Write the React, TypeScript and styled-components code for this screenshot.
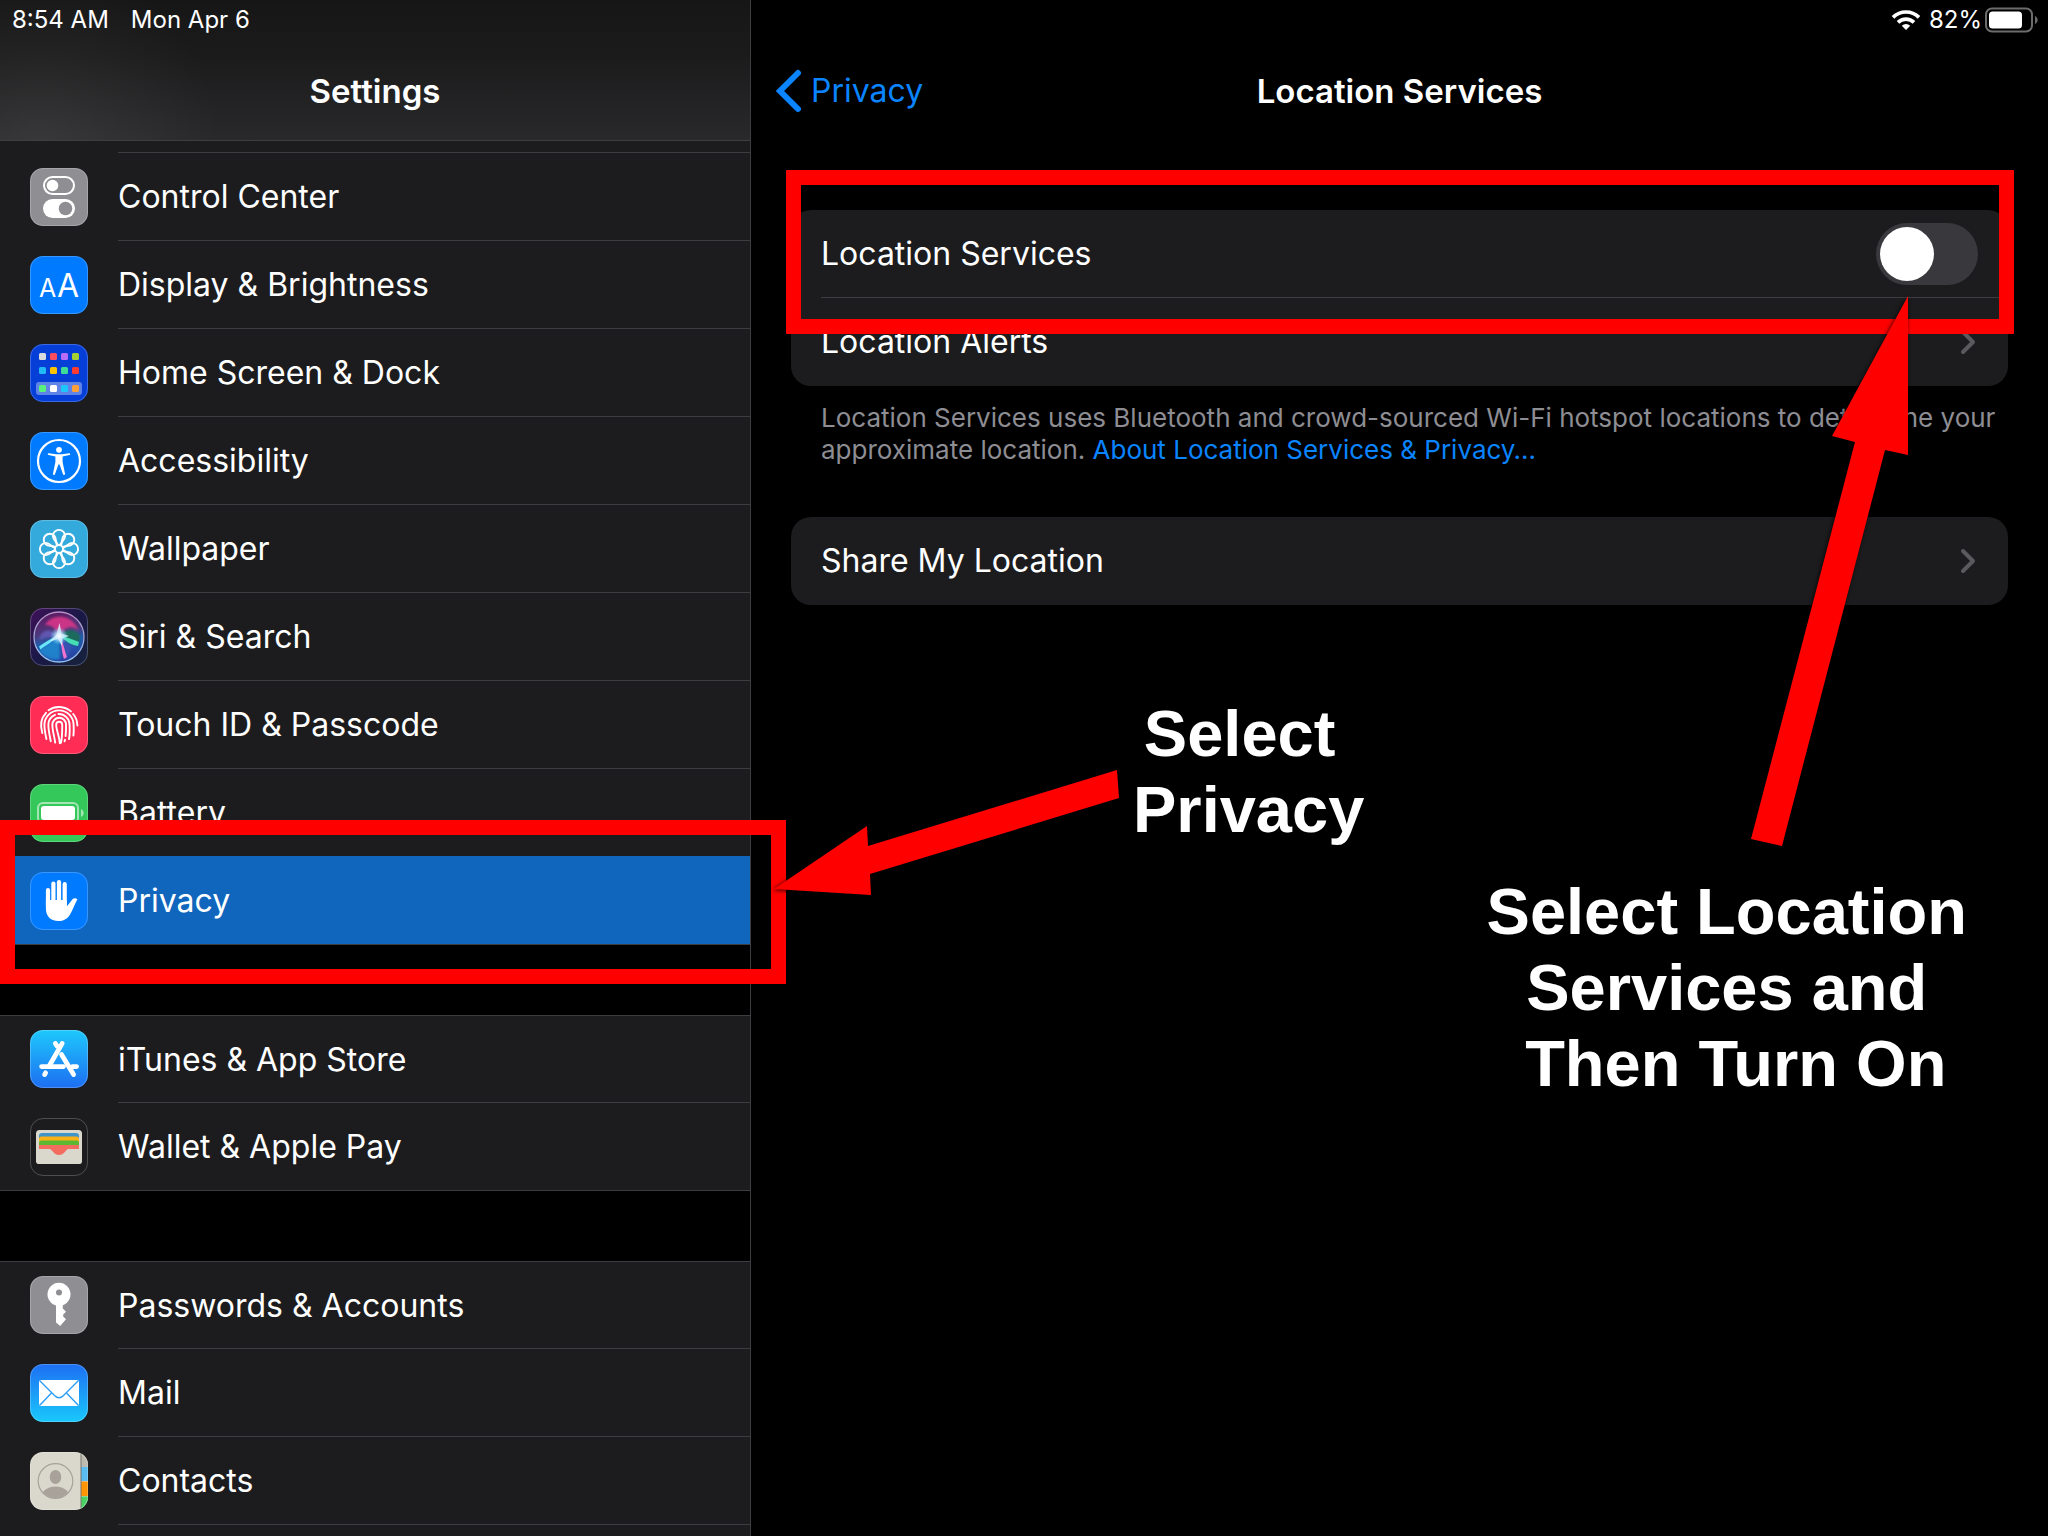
import React from "react";
import styled, { createGlobalStyle, css } from "styled-components";

const GlobalStyle = createGlobalStyle`
  *, *::before, *::after { box-sizing: border-box; }
  html, body { margin: 0; background: #000; }
  body {
    font-family: Inter, "Noto Sans", "Liberation Sans", sans-serif;
    color: #fff;
  }
  ul { list-style: none; margin: 0; padding: 0; }
  h1, h2, p { margin: 0; }
`;

const colors = {
  cell: "#1c1c1e",
  line: "#3d3d41",
  blue: "#0a84ff",
  selected: "#1065bd",
  muted: "#8d8d93",
  mark: "#ff0000",
};

/* ---------- layout ---------- */

const Page = styled.div`
  position: relative;
  display: flex;
  height: 100vh;
  overflow: hidden;
  background: #000;
`;

const Sidebar = styled.aside`
  display: flex;
  flex-direction: column;
  flex: 0 0 751px;
  min-height: 0;
  border-right: 1px solid ${colors.line};
`;

const SidebarTop = styled.header`
  flex: none;
  border-bottom: 1px solid ${colors.line};
  background:
    radial-gradient(circle at 40px 140px, rgba(255, 255, 255, 0.07), transparent 180px),
    linear-gradient(#161617 0%, #1b1b1c 40%, #29292b 100%);
`;

const Detail = styled.main`
  flex: 1;
  min-width: 0;
`;

const StatusBar = styled.div<{ $end?: boolean }>`
  display: flex;
  align-items: center;
  justify-content: ${(p) => (p.$end ? "flex-end" : "flex-start")};
  gap: ${(p) => (p.$end ? "8px" : "22px")};
  height: 40px;
  padding: 0 ${(p) => (p.$end ? "10px" : "12px")};
  font-size: 24px;
  line-height: 32px;
`;

const Charge = styled.span`
  display: flex;
  align-items: center;
  gap: 2px;
`;

const NavBar = styled.div`
  display: grid;
  grid-template-columns: 1fr auto 1fr;
  align-items: center;
  height: 100px;
  padding: 2px 24px 0;
`;

const NavTitle = styled.h1`
  grid-column: 2;
  font-size: 33px;
  line-height: 40px;
  font-weight: 600;
`;

const BackButton = styled.button`
  display: flex;
  align-items: center;
  justify-self: start;
  gap: 8px;
  padding: 0;
  border: 0;
  background: none;
  color: ${colors.blue};
  font: inherit;
  font-size: 32px;
  line-height: 40px;
`;

/* ---------- settings list ---------- */

const Groups = styled.nav`
  display: flex;
  flex-direction: column;
  gap: 70px;
  min-height: 0;
  overflow: hidden;
`;

const Group = styled.ul<{ $continues?: boolean }>`
  flex: none;
  background: ${colors.cell};
  border-bottom: 1px solid ${colors.line};
  ${(p) =>
    p.$continues
      ? css`
          padding-top: 11px;
        `
      : css`
          border-top: 1px solid ${colors.line};
        `}
`;

const RowButton = styled.button<{ $selected?: boolean; $ruled?: boolean }>`
  display: flex;
  align-items: stretch;
  width: 100%;
  height: ${(p) => (p.$ruled ? "88px" : "86px")};
  padding: 0 0 0 30px;
  gap: 30px;
  border: 0;
  background: ${(p) => (p.$selected ? colors.selected : "transparent")};
  color: inherit;
  font: inherit;
  font-size: 32px;
  line-height: 40px;
  text-align: left;
`;

const IconTile = styled.span<{ $bg: string; $ruled?: boolean }>`
  align-self: center;
  flex: none;
  width: 58px;
  height: 58px;
  margin-top: ${(p) => (p.$ruled ? "2px" : "0")};
  border-radius: 13px;
  overflow: hidden;
  background: ${(p) => p.$bg};
  outline: 1px solid rgba(255, 255, 255, 0.22);
  outline-offset: -1px;

  svg { display: block; width: 58px; height: 58px; }
`;

const RowLabel = styled.span<{ $ruled?: boolean; $clear?: boolean }>`
  display: flex;
  align-items: center;
  flex: 1;
  border-top: ${(p) => (p.$ruled ? `1px solid ${p.$clear ? "transparent" : colors.line}` : "0")};
  padding-top: 1px;
`;

const NextRow = styled.li`
  height: 88px;
  margin-left: 118px;
  border-top: 1px solid ${colors.line};
`;

/* ---------- detail cards ---------- */

const Sections = styled.div`
  display: flex;
  flex-direction: column;
  padding: 70px 40px;
`;

const Card = styled.div`
  border-radius: 20px;
  background: ${colors.cell};
  padding-left: 30px;
`;

const CardRow = styled.div<{ $ruled?: boolean }>`
  display: flex;
  align-items: center;
  justify-content: space-between;
  height: 88px;
  padding-right: 30px;
  border-bottom: ${(p) => (p.$ruled ? `1px solid ${colors.line}` : "0")};
  font-size: 32px;
  line-height: 40px;
`;

const CardLink = styled.button`
  display: flex;
  align-items: center;
  justify-content: space-between;
  width: 100%;
  height: 88px;
  padding: 0 32px 0 0;
  border: 0;
  background: none;
  color: inherit;
  font: inherit;
  font-size: 32px;
  line-height: 40px;
  text-align: left;
`;

const Footnote = styled.p`
  padding: 16px 10px 51px 30px;
  color: ${colors.muted};
  font-size: 26px;
  line-height: 32px;
`;

const FootLink = styled.a`
  color: ${colors.blue};
  text-decoration: none;
`;

const Switch = styled.input`
  appearance: none;
  flex: none;
  display: flex;
  align-items: center;
  width: 102px;
  height: 62px;
  margin: 0;
  padding: 4px;
  border-radius: 31px;
  background: #39393d;

  &::before {
    content: "";
    width: 54px;
    height: 54px;
    border-radius: 50%;
    background: #fff;
  }
  &:checked { background: #30d158; justify-content: flex-end; }
`;

/* ---------- annotations laid over the screen ---------- */

const Notes = styled.div`
  position: absolute;
  inset: 0;
  pointer-events: none;
`;

const frame = css`
  position: absolute;
  height: 164px;
  border: 15px solid ${colors.mark};
`;

const PrivacyFrame = styled.div`
  ${frame}
  top: 820px;
  left: 0;
  width: 786px;
`;

const ServicesFrame = styled.div`
  ${frame}
  top: 170px;
  left: 786px;
  right: 34px;
`;

const arrow = css`
  position: absolute;
  overflow: visible;
  fill: ${colors.mark};
  filter: drop-shadow(-1px 1px 2px rgba(0, 0, 0, 0.8));
`;

const PrivacyArrow = styled.svg`
  ${arrow}
  top: 760px;
  left: 770px;
`;

const ServicesArrow = styled.svg`
  ${arrow}
  top: 290px;
  right: 128px;
`;

const note = css`
  position: absolute;
  font-family: "Liberation Sans", Arial, sans-serif;
  font-weight: 700;
  font-size: 65px;
  line-height: 76px;
  text-align: center;
  white-space: pre;
`;

const PrivacyNote = styled.p`
  ${note}
  top: 696px;
  left: 1133px;
`;

const ServicesNote = styled.p`
  ${note}
  top: 874px;
  right: 63px;
`;

/* ---------- icons ---------- */

const ControlCenterIcon = () => (
  <svg viewBox="0 0 58 58">
    <rect x="14" y="9" width="30" height="17" rx="8.5" fill="none" stroke="#fff" strokeWidth="2" />
    <circle cx="22.5" cy="17.5" r="5.8" fill="#fff" />
    <rect x="13" y="31" width="32" height="19" rx="9.5" fill="#fff" />
    <circle cx="35.5" cy="40.5" r="6.8" fill="#8e8e93" />
  </svg>
);

const DisplayIcon = () => (
  <svg viewBox="0 0 58 58" fill="#fff" fontFamily="Inter, sans-serif" fontWeight="400">
    <text x="9" y="41" fontSize="25">A</text>
    <text x="27" y="41" fontSize="32">A</text>
  </svg>
);

const dots = [
  ["#d9dadd", "#ff4c5e", "#b86cf7", "#a4d233"],
  ["#22b8f5", "#ffc400", "#3ddc97", "#ff3a30"],
  ["#5af07c", "#ffffff", "#1cc8fb", "#ff9f38"],
];
const dotRows = [9, 23, 41];

const HomeIcon = () => (
  <svg viewBox="0 0 58 58">
    <rect x="6" y="38" width="46" height="13" rx="3" fill="#5f83e6" />
    {dots.map((row, r) =>
      row.map((c, i) => (
        <rect key={c} x={9 + i * 11} y={dotRows[r]} width="7" height="7" rx="1.5" fill={c} />
      ))
    )}
  </svg>
);

const AccessibilityIcon = () => (
  <svg viewBox="0 0 58 58" fill="#fff">
    <circle cx="29" cy="29" r="21" fill="none" stroke="#fff" strokeWidth="2.2" />
    <circle cx="29" cy="17.8" r="2.9" />
    <path d="M18.8 21.2 L26 22.2 H32 L39.2 21.2 A.9 .9 0 0 1 39.4 23 L32.6 24.6 V30 L35 41.6 A1 1 0 0 1 33 42.2 L29.6 32.6 H28.4 L25 42.2 A1 1 0 0 1 23 41.6 L25.4 30 V24.6 L18.6 23 A.9 .9 0 0 1 18.8 21.2Z" />
  </svg>
);

const WallpaperIcon = () => (
  <svg viewBox="0 0 58 58" fill="none" stroke="#fff" strokeWidth="1.9">
    <circle cx="29" cy="29" r="4" />
    {[0, 45, 90, 135, 180, 225, 270, 315].map((a) => (
      <path
        key={a}
        transform={`rotate(${a} 29 29)`}
        d="M28 25.200 C26.500 21.500 22.900 19.500 22.900 16 A6.100 6.100 0 0 1 35.100 16 C35.100 19.500 31.500 21.500 30 25.200"
      />
    ))}
  </svg>
);

const SiriIcon = () => (
  <svg viewBox="0 0 58 58">
    <defs>
      <linearGradient id="siriBg" x1="0" y1="0" x2="1" y2="1">
        <stop offset="0" stopColor="#3f1159" />
        <stop offset=".5" stopColor="#1a1846" />
        <stop offset="1" stopColor="#16243c" />
      </linearGradient>
      <linearGradient id="siriOrb" x1=".4" y1="0" x2=".6" y2="1">
        <stop offset="0" stopColor="#5e1a63" />
        <stop offset=".4" stopColor="#4c3a7e" />
        <stop offset=".6" stopColor="#1d5fae" />
        <stop offset="1" stopColor="#2a3fa4" />
      </linearGradient>
      <radialGradient id="siriGlow">
        <stop offset="0" stopColor="#fff" />
        <stop offset=".4" stopColor="#cdeeff" stopOpacity=".75" />
        <stop offset="1" stopColor="#6fd0ff" stopOpacity="0" />
      </radialGradient>
      <linearGradient id="siriRing" x1="0" y1="0" x2="0" y2="1">
        <stop offset="0" stopColor="#b98fc4" />
        <stop offset="1" stopColor="#8fc4f2" />
      </linearGradient>
      <filter id="siriSoft" x="-20%" y="-20%" width="140%" height="140%">
        <feGaussianBlur stdDeviation="1.200" />
      </filter>
    </defs>
    <rect width="58" height="58" fill="url(#siriBg)" />
    <circle cx="29" cy="29" r="24.5" fill="url(#siriOrb)" />
    <g filter="url(#siriSoft)">
      <path d="M15 17 C21 5 43 5 49 23 C44 17 34 18 29 28 C26 20 21 17 15 17Z" fill="#e0368a" opacity=".85" />
      <path d="M30 28 C37 20 46 21 50 28 C50 35 46 38 42 36Z" fill="#1f6a5c" />
      <path d="M29 28 C20 20 12 20 9 32 C15 29 20 29 29 28Z" fill="#6a62c8" opacity=".7" />
      <path d="M29 28 L9 42 C14 50 24 53 30 51Z" fill="#1c8ad0" opacity=".85" />
      <path d="M29 28 L42 38 C40 47 36 50 34 51Z" fill="#3d50b4" opacity=".8" />
    </g>
    <path d="M29 27 C32 36 31 42 34 51 L37 49 C34 42 34 35 29 27Z" fill="#ee74cd" />
    <path d="M28 27 C20 31 14 35 9 38.500 L10.500 41.500 C16 37 23 34 28 27Z" fill="#6be6fa" />
    <path d="M29 27 C36 29 42 31 49 34 L48 38 C41 37 35 33 29 27Z" fill="#46dcb4" />
    <path d="M29.500 15 L31.500 25.500 L39 28 L32.500 30 L32 38 L28 31 L20 33.500 L26.500 26.500Z" fill="#e9f6ff" opacity=".85" />
    <circle cx="29" cy="28" r="9" fill="url(#siriGlow)" />
    <circle cx="29" cy="29" r="25" fill="none" stroke="url(#siriRing)" strokeWidth="1.300" />
  </svg>
);

const TouchIcon = () => (
  <svg viewBox="0 0 58 58" fill="none" stroke="#fff" strokeWidth="1.9" strokeLinecap="round">
    <path d="M18.5 14.2 A18.6 18.6 0 0 1 41 15.4" />
    <path d="M43.2 18 A18.5 18.5 0 0 1 47.4 29.5" />
    <path d="M12.3 37 C10.2 30 10.6 22.6 16 16.8" />
    <path d="M16.4 43 C15.4 38 14.4 34 14.4 29 A14.6 14.6 0 0 1 43.6 29 C43.7 32.6 44 35 43.4 39.6" />
    <path d="M20.8 45.2 C19.8 40 18.2 34 18.4 28.4 A10.7 10.7 0 0 1 25 18.8" />
    <path d="M28.4 18 A10.8 10.8 0 0 1 39.6 29 C39.8 34.6 40 38.6 39 43" />
    <path d="M25.2 46.6 C24.4 40 22.2 34.4 22.4 28.6 A6.8 6.8 0 0 1 36 28.6 C36.2 33 36 36 35.6 40" />
    <path d="M35 43.6 L34.6 45.4" />
    <path d="M29.8 47.2 C29.4 40 26.2 34.4 26.2 28.8 A3 3 0 0 1 32.2 28.8 C32.2 34 32.4 40 31 46.8" />
  </svg>
);

const BatteryTileIcon = () => (
  <svg viewBox="0 0 58 58">
    <rect x="8" y="19" width="40" height="20" rx="5" fill="none" stroke="#fff" strokeOpacity=".55" strokeWidth="2" />
    <rect x="11" y="22" width="34" height="14" rx="3" fill="#fff" />
    <path d="M51 25 C54.5 26.5 54.5 31.500 51 33Z" fill="#fff" fillOpacity=".55" />
  </svg>
);

const HandIcon = () => (
  <svg viewBox="0 0 58 58" fill="#fff">
    <g stroke="#fff" strokeWidth="4.2" strokeLinecap="round" fill="none">
      <path d="M18 18 V34" />
      <path d="M23.400 11.500 V32" />
      <path d="M29 10.200 V32" />
      <path d="M34.700 12.200 V34" />
    </g>
    <path d="M15.900 28 H36.800 V34.500 L42.500 27.200 C44 25.700 46.200 26 47.400 27.300 C44.600 32.500 42.600 38.500 39.800 43 C36.800 47.300 33.500 49 28.500 49 C20 49 15.900 43.500 15.900 36.500Z" />
  </svg>
);

const AppStoreIcon = () => (
  <svg viewBox="0 0 58 58" fill="none" stroke="#fff" strokeWidth="4.8" strokeLinecap="round">
    <path d="M25.400 13.400 L27 16" />
    <path d="M32.200 13.400 L19.500 35.500" />
    <path d="M31.500 24.500 L43.600 44.600" />
    <path d="M11.600 36.600 H33.500 M42.500 36.600 H46.600" />
    <path d="M14.600 44.600 L15.600 42.800" />
  </svg>
);

const WalletIcon = () => (
  <svg viewBox="0 0 58 58">
    <rect x="6" y="12" width="46" height="34" rx="3.500" fill="#dad7cc" />
    <path d="M9 18 a3 3 0 0 1 3 -3 H46 a3 3 0 0 1 3 3 V20 H9Z" fill="#3f95c9" />
    <path d="M9 21 a2.500 2.500 0 0 1 2 -2.500 H47 a2.500 2.500 0 0 1 2 2.500 V24 H9Z" fill="#fcb116" />
    <path d="M9 25 a2.500 2.500 0 0 1 2 -2.500 H47 a2.500 2.500 0 0 1 2 2.500 V28 H9Z" fill="#5cb731" />
    <rect x="9" y="27" width="40" height="11" fill="#f26d5f" />
    <path d="M6 31 H19.500 C22.500 31 23 37 29 37 C35 37 35.500 31 38.500 31 H52 V42.500 a3.500 3.500 0 0 1 -3.500 3.500 H9.500 a3.500 3.500 0 0 1 -3.500 -3.500Z" fill="#dad7cc" />
  </svg>
);

const KeyIcon = () => (
  <svg viewBox="0 0 58 58">
    <circle cx="29" cy="18.300" r="11.500" fill="#fff" />
    <path d="M26 26 H32.800 V32.600 L36 35.800 L33.200 38.600 V40.500 L36 43.300 L30.200 50 L26 46.400Z" fill="#fff" />
    <circle cx="29" cy="16.500" r="3" fill="#8e8e93" />
  </svg>
);

const MailIcon = () => (
  <svg viewBox="0 0 58 58">
    <rect x="9" y="16" width="40" height="26" rx="1.500" fill="#fff" />
    <g fill="none" stroke="#2a9df7" strokeWidth="1.400">
      <path d="M9.500 16.500 L24.500 31.500 C27.500 34.500 30.500 34.500 33.500 31.500 L48.500 16.500" />
      <path d="M9.500 41.500 L21.500 29 M48.500 41.500 L36.500 29" />
    </g>
  </svg>
);

const ContactsIcon = () => (
  <svg viewBox="0 0 58 58">
    <defs>
      <clipPath id="contactDisc">
        <circle cx="25.500" cy="29" r="17" />
      </clipPath>
    </defs>
    <rect x="51" width="7" height="15" fill="#bdbab0" />
    <rect x="51" y="15" width="7" height="14" fill="#59bdf2" />
    <rect x="51" y="29.500" width="7" height="14.500" fill="#ff9504" />
    <rect x="51" y="44.500" width="7" height="14" fill="#4bd163" />
    <path d="M51 0 V58" stroke="#77756e" strokeWidth="1" />
    <circle cx="25.500" cy="29" r="17.300" fill="none" stroke="#a8a29b" strokeWidth="1.200" />
    <g fill="#a8a29b" clipPath="url(#contactDisc)">
      <ellipse cx="25.500" cy="25" rx="5.800" ry="7" />
      <ellipse cx="25.500" cy="44.500" rx="14" ry="10" />
    </g>
  </svg>
);

const WifiIcon = () => (
  <svg width="30" height="22" viewBox="0 0 30 22" fill="none" stroke="#fff" strokeWidth="3.600">
    <path d="M2 8.400 A18.500 18.500 0 0 1 28 8.400" />
    <path d="M7 13.400 A11.400 11.400 0 0 1 23 13.400" />
    <path d="M15 21 L10.800 16.700 A6 6 0 0 1 19.200 16.700Z" fill="#fff" stroke="none" />
  </svg>
);

const BatteryIcon = () => (
  <svg width="54" height="26" viewBox="0 0 54 26">
    <rect x="2" y="1.500" width="46" height="23" rx="6" fill="none" stroke="#6c6c6e" strokeWidth="2" />
    <rect x="5" y="4.500" width="33" height="17" rx="3.500" fill="#fff" />
    <path d="M51 9 C54.500 10.500 54.500 15.500 51 17Z" fill="#6c6c6e" />
  </svg>
);

const Chevron = () => (
  <svg width="16" height="26" viewBox="0 0 16 26" fill="none" stroke="#5a5a5e" strokeWidth="4" strokeLinecap="round" strokeLinejoin="round">
    <path d="M3 3 L13 13 L3 23" />
  </svg>
);

const BackChevron = () => (
  <svg width="28" height="44" viewBox="0 0 28 44" fill="none" stroke={colors.blue} strokeWidth="6" strokeLinecap="round" strokeLinejoin="miter">
    <path d="M23 4 L5 22 L23 40" />
  </svg>
);

/* ---------- data ---------- */

type Item = { label: string; bg: string; Icon: React.FC };

const groups: Item[][] = [
  [
    { label: "Control Center", bg: "#8e8e93", Icon: ControlCenterIcon },
    { label: "Display & Brightness", bg: "#007aff", Icon: DisplayIcon },
    { label: "Home Screen & Dock", bg: "#053fd8", Icon: HomeIcon },
    { label: "Accessibility", bg: "#007aff", Icon: AccessibilityIcon },
    { label: "Wallpaper", bg: "#34aadc", Icon: WallpaperIcon },
    { label: "Siri & Search", bg: "#1a1846", Icon: SiriIcon },
    { label: "Touch ID & Passcode", bg: "#ff2d55", Icon: TouchIcon },
    { label: "Battery", bg: "#34c759", Icon: BatteryTileIcon },
    { label: "Privacy", bg: "#007aff", Icon: HandIcon },
  ],
  [
    { label: "iTunes & App Store", bg: "linear-gradient(#1ec8fc, #1d6ef2)", Icon: AppStoreIcon },
    { label: "Wallet & Apple Pay", bg: "#1c1c1e", Icon: WalletIcon },
  ],
  [
    { label: "Passwords & Accounts", bg: "#8e8e93", Icon: KeyIcon },
    { label: "Mail", bg: "linear-gradient(#1d6ff3, #1ac8fc)", Icon: MailIcon },
    { label: "Contacts", bg: "#dad7cc", Icon: ContactsIcon },
  ],
];

const selectedLabel = "Privacy";

/* ---------- app ---------- */

export default function App() {
  return (
    <>
      <GlobalStyle />
      <Page>
        <Sidebar>
          <SidebarTop>
            <StatusBar>
              <span>8:54 AM</span>
              <span>Mon Apr 6</span>
            </StatusBar>
            <NavBar>
              <NavTitle>Settings</NavTitle>
            </NavBar>
          </SidebarTop>
          <Groups aria-label="Settings">
            {groups.map((items, g) => (
              <Group key={g} $continues={g === 0}>
                {items.map(({ label, bg, Icon }, i) => {
                  const selected = label === selectedLabel;
                  const ruled = g === 0 || i > 0;
                  return (
                    <li key={label}>
                      <RowButton type="button" $selected={selected} $ruled={ruled} aria-current={selected || undefined}>
                        <IconTile $bg={bg} $ruled={ruled} aria-hidden="true">
                          <Icon />
                        </IconTile>
                        <RowLabel $ruled={ruled} $clear={selected}>
                          {label}
                        </RowLabel>
                      </RowButton>
                    </li>
                  );
                })}
                {g === groups.length - 1 && <NextRow aria-hidden="true" />}
              </Group>
            ))}
          </Groups>
        </Sidebar>

        <Detail>
          <StatusBar $end>
            <WifiIcon />
            <Charge>
              82%
              <BatteryIcon />
            </Charge>
          </StatusBar>
          <NavBar>
            <BackButton type="button">
              <BackChevron />
              Privacy
            </BackButton>
            <NavTitle as="h2">Location Services</NavTitle>
          </NavBar>
          <Sections>
            <Card>
              <CardRow $ruled>
                <label htmlFor="location-services">Location Services</label>
                <Switch id="location-services" type="checkbox" role="switch" />
              </CardRow>
              <CardLink type="button">
                Location Alerts
                <Chevron />
              </CardLink>
            </Card>
            <Footnote>
              Location Services uses Bluetooth and crowd-sourced Wi-Fi hotspot locations to determine your approximate
              location. <FootLink href="#about">About Location Services &amp; Privacy…</FootLink>
            </Footnote>
            <Card>
              <CardLink type="button">
                Share My Location
                <Chevron />
              </CardLink>
            </Card>
          </Sections>
        </Detail>

        <Notes>
          <PrivacyFrame />
          <ServicesFrame />
          <PrivacyArrow width="350" height="140" viewBox="0 0 350 140" aria-hidden="true">
            <path d="M4 129 L97 66 L98 86 L347 10 L349 38 L100 114 L101 135Z" />
          </PrivacyArrow>
          <ServicesArrow width="170" height="560" viewBox="0 0 170 560" aria-hidden="true">
            <path d="M158 6 L82 146 L105 152 L1 549 L32 556 L135 160 L158 165Z" />
          </ServicesArrow>
          <PrivacyNote>{"Select \nPrivacy"}</PrivacyNote>
          <ServicesNote>{"Select Location \nServices and \nThen Turn On"}</ServicesNote>
        </Notes>
      </Page>
    </>
  );
}
